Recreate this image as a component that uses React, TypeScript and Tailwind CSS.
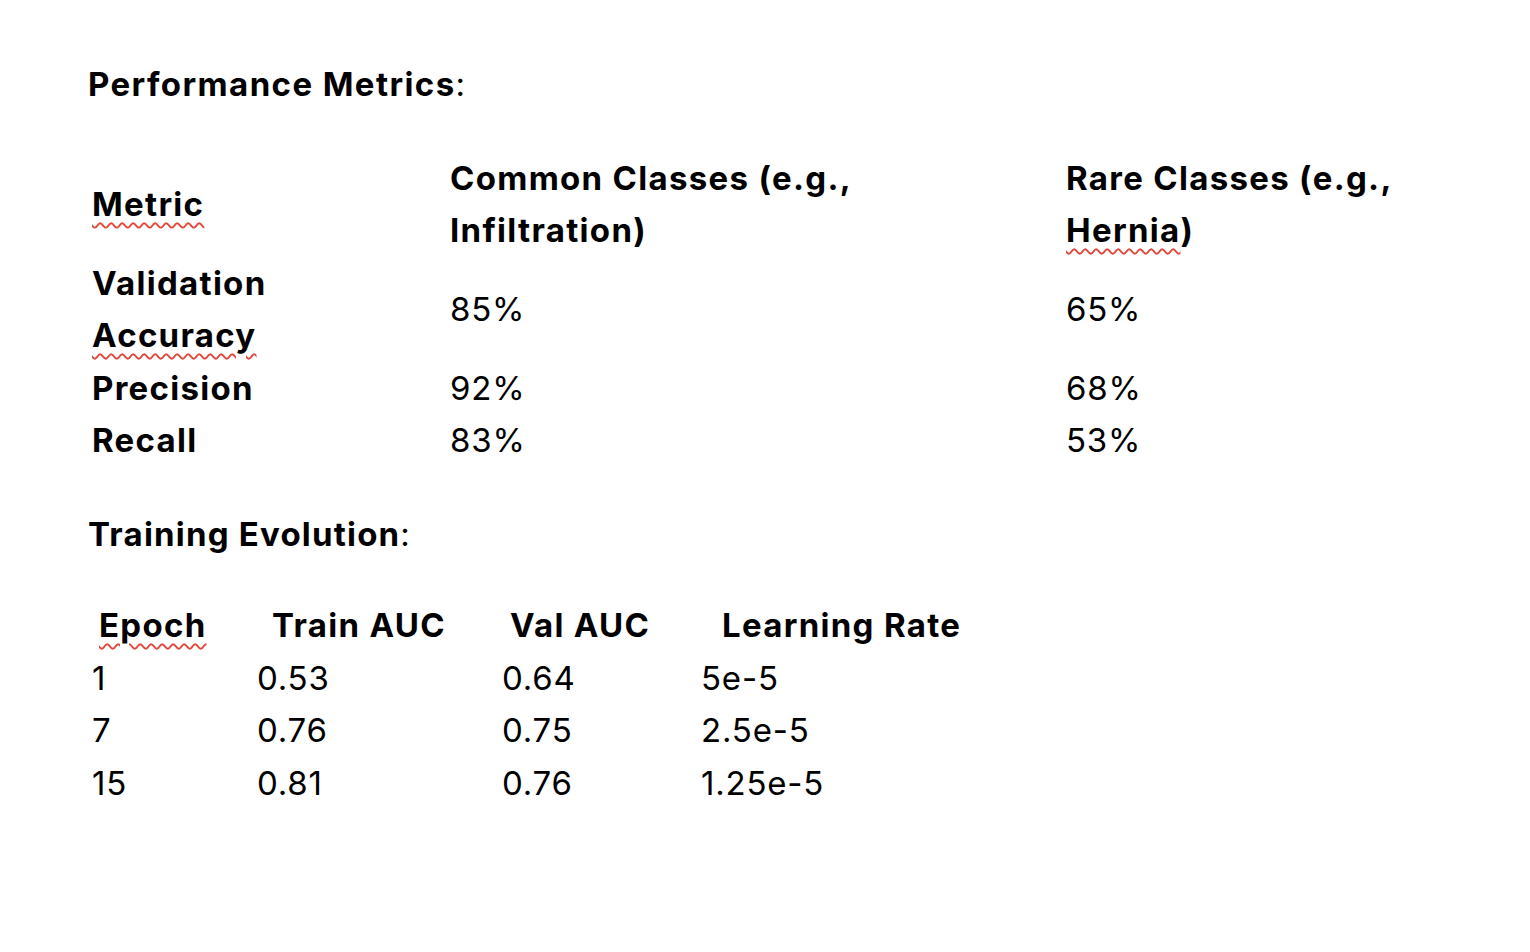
const metrics = [
  { name: ["Validation", "Accuracy"], common: "85%", rare: "65%" },
  { name: ["Precision"], common: "92%", rare: "68%" },
  { name: ["Recall"], common: "83%", rare: "53%" },
];

const epochs = [
  ["1", "0.53", "0.64", "5e-5"],
  ["7", "0.76", "0.75", "2.5e-5"],
  ["15", "0.81", "0.76", "1.25e-5"],
];

const squiggle =
  "underline decoration-wavy decoration-[#e2473b] decoration-[2px] underline-offset-[6px]";

export default function App() {
  return (
    <div
      className="min-h-screen w-full bg-white text-black pl-[88px] pt-[58px] text-[33px] leading-[52.5px] tracking-[0.8px]"
      style={{ fontFamily: "Inter, 'Liberation Sans', sans-serif" }}
    >
      <p className="font-bold tracking-[1.4px]">
        Performance Metrics<span className="font-normal">:</span>
      </p>

      {/* Performance table */}
      <div className="mt-[41px] pl-[4px] grid grid-cols-[358px_616px_1fr]">
        <div className="flex items-center font-bold tracking-[1.3px]">
          <span className={squiggle}>Metric</span>
        </div>
        <div className="font-bold tracking-[1.3px]">
          <div>Common Classes (e.g.,</div>
          <div>Infiltration)</div>
        </div>
        <div className="font-bold tracking-[1.3px]">
          <div>Rare Classes (e.g.,</div>
          <div>
            <span className={squiggle}>Hernia</span>)
          </div>
        </div>

        {metrics.map((m) => (
          <div key={m.name.join(" ")} className="contents">
            <div className="font-bold tracking-[1.3px]">
              {m.name.map((line) => (
                <div key={line}>
                  {line === "Accuracy" ? <span className={squiggle}>{line}</span> : line}
                </div>
              ))}
            </div>
            <div className="flex items-center">{m.common}</div>
            <div className="flex items-center">{m.rare}</div>
          </div>
        ))}
      </div>

      <p className="mt-[41px] font-bold tracking-[1.2px]">
        Training Evolution<span className="font-normal">:</span>
      </p>

      {/* Training table */}
      <div className="mt-[39px] pl-[4px] grid grid-cols-[165px_245px_199px_1fr]">
        <div className="pl-[7px] font-bold tracking-[1.3px]">
          <span className={squiggle}>Epoch</span>
        </div>
        <div className="pl-[15px] font-bold tracking-[1.3px]">Train AUC</div>
        <div className="pl-[8px] font-bold tracking-[1.3px]">Val AUC</div>
        <div className="pl-[21px] font-bold tracking-[1.3px]">Learning Rate</div>
        {epochs.map((row) => (
          <div key={row[0]} className="contents">
            {row.map((cell, i) => (
              <div key={i}>{cell}</div>
            ))}
          </div>
        ))}
      </div>
    </div>
  );
}
